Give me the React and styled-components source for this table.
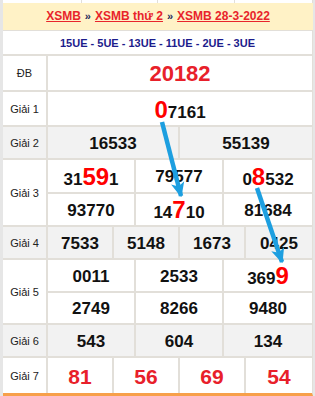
import React from 'react'
import styled, { createGlobalStyle } from 'styled-components'

const GlobalStyle = createGlobalStyle`
	html, body {
		margin: 0;
		padding: 0;
		background: #fff;
	}
	* {
		box-sizing: border-box;
	}
`

const LINE = '#e2dfd9'

const prizes = [
	{ label: 'ĐB', h: 36, rows: [[{ v: '20182', special: true }]] },
	{ label: 'Giải 1', h: 35, rows: [[{ v: ['', '0', '7161'] }]] },
	{ label: 'Giải 2', h: 33, alt: true, rows: [[{ v: '16533' }, { v: '55139' }]] },
	{
		label: 'Giải 3',
		h: 67,
		rows: [
			[{ v: ['31', '59', '1'] }, { v: '79577' }, { v: ['0', '8', '532'] }],
			[{ v: '93770' }, { v: ['14', '7', '10'] }, { v: '81684' }],
		],
	},
	{
		label: 'Giải 4',
		h: 33,
		alt: true,
		rows: [[{ v: '7533' }, { v: '5148' }, { v: '1673' }, { v: '0425' }]],
	},
	{
		label: 'Giải 5',
		h: 65,
		rows: [
			[{ v: '0011' }, { v: '2533' }, { v: ['369', '9', ''] }],
			[{ v: '2749' }, { v: '8266' }, { v: '9480' }],
		],
	},
	{ label: 'Giải 6', h: 33, alt: true, rows: [[{ v: '543' }, { v: '604' }, { v: '134' }]] },
	{
		label: 'Giải 7',
		h: 38,
		last: true,
		rows: [[{ v: '81', red: true }, { v: '56', red: true }, { v: '69', red: true }, { v: '54', red: true }]],
	},
]

function Number({ cell }) {
	if (Array.isArray(cell.v)) {
		const [before, hit, after] = cell.v
		return (
			<Value>
				{before}
				<Hit>{hit}</Hit>
				{after}
			</Value>
		)
	}
	return (
		<Value $special={cell.special} $red={cell.red}>
			{cell.v}
		</Value>
	)
}

function App() {
	return (
		<Page>
			<GlobalStyle />
			<TopStrip>
				<span />
				<span />
				<span />
				<span />
			</TopStrip>

			<Header>
				<Crumb>XSMB</Crumb>
				<Sep>»</Sep>
				<Crumb>XSMB thứ 2</Crumb>
				<Sep>»</Sep>
				<Crumb>XSMB 28-3-2022</Crumb>
			</Header>

			<Codes>15UE - 5UE - 13UE - 11UE - 2UE - 3UE</Codes>

			{prizes.map((p) => (
				<Row key={p.label} $h={p.h} $alt={p.alt} $last={p.last}>
					<Label>{p.label}</Label>
					<Lines>
						{p.rows.map((cells, i) => (
							<Line key={i} $cols={cells.length} $divider={i < p.rows.length - 1}>
								{cells.map((c, j) => (
									<Cell key={j}>
										<Number cell={c} />
									</Cell>
								))}
							</Line>
						))}
					</Lines>
				</Row>
			))}

			<Arrows viewBox='0 0 315 396' width='315' height='396'>
				<defs>
					<marker
						id='head'
						viewBox='0 0 10 10'
						refX='9'
						refY='5'
						markerWidth='15'
						markerHeight='15'
						markerUnits='userSpaceOnUse'
						orient='auto'
					>
						<path d='M0,0.5 L10,5 L0,9.5 L2.5,5 z' fill='#1d9fe0' />
					</marker>
				</defs>
				<line x1='162' y1='122' x2='181' y2='196' stroke='#1d9fe0' strokeWidth='4.5' markerEnd='url(#head)' />
				<line x1='257' y1='188' x2='282' y2='262' stroke='#1d9fe0' strokeWidth='4.5' markerEnd='url(#head)' />
			</Arrows>
		</Page>
	)
}

const Page = styled.div`
	position: relative;
	width: 315px;
	height: 396px;
	overflow: hidden;
	border-left: 3px solid #e6e6e6;
	border-right: 2px solid #e6e6e6;
	font-family: 'Liberation Sans', Arial, sans-serif;
`

const TopStrip = styled.div`
	display: grid;
	grid-template-columns: 79px 76px 77px 1fr;
	height: 3px;

	span {
		border-right: 1px solid ${LINE};
	}
`

const Header = styled.div`
	display: flex;
	align-items: center;
	justify-content: center;
	gap: 4px;
	height: 28px;
	background: #fff2c6;
	border-bottom: 1px solid ${LINE};
	padding-bottom: 1px;
`

const Crumb = styled.a`
	color: #e8242b;
	font-size: 12px;
	font-weight: bold;
	text-decoration: underline;
`

const Sep = styled.span`
	color: #1e2a5a;
	font-size: 11px;
	font-weight: bold;
`

const Codes = styled.div`
	display: flex;
	align-items: center;
	justify-content: center;
	height: 25px;
	border-bottom: 2px solid ${LINE};
	border-right: 1px solid ${LINE};
	color: #1c1c8c;
	font-size: 11px;
	font-weight: bold;
`

const Row = styled.div`
	display: grid;
	grid-template-columns: 45px 1fr;
	height: ${(props) => props.$h}px;
	background: ${(props) => (props.$alt ? '#f2f2f2' : '#fff')};
	border-bottom: ${(props) => (props.$last ? '3px solid #f7a04a' : `2px solid ${LINE}`)};
	border-right: 1px solid ${LINE};
`

const Label = styled.div`
	display: flex;
	align-items: center;
	justify-content: center;
	border-right: 2px solid ${LINE};
	color: #222;
	font-size: 11px;
`

const Lines = styled.div`
	display: flex;
	flex-direction: column;
`

const Line = styled.div`
	flex: 1;
	display: grid;
	grid-template-columns: repeat(${(props) => props.$cols}, 1fr);
	border-bottom: ${(props) => (props.$divider ? `2px solid ${LINE}` : 'none')};
`

const Cell = styled.div`
	display: flex;
	align-items: center;
	justify-content: center;
	border-right: 2px solid ${LINE};

	&:last-child {
		border-right: none;
	}
`

const Value = styled.span`
	font-weight: bold;
	font-size: ${(props) => (props.$special ? '22px' : props.$red ? '21px' : '17px')};
	color: ${(props) => (props.$special || props.$red ? '#e8202a' : '#111')};
	line-height: 1;
	padding-top: 2px;
`

const Hit = styled.span`
	color: #ff0000;
	font-size: 24px;
`

const Arrows = styled.svg`
	position: absolute;
	top: 0;
	left: -3px;
	pointer-events: none;
`

export default App
